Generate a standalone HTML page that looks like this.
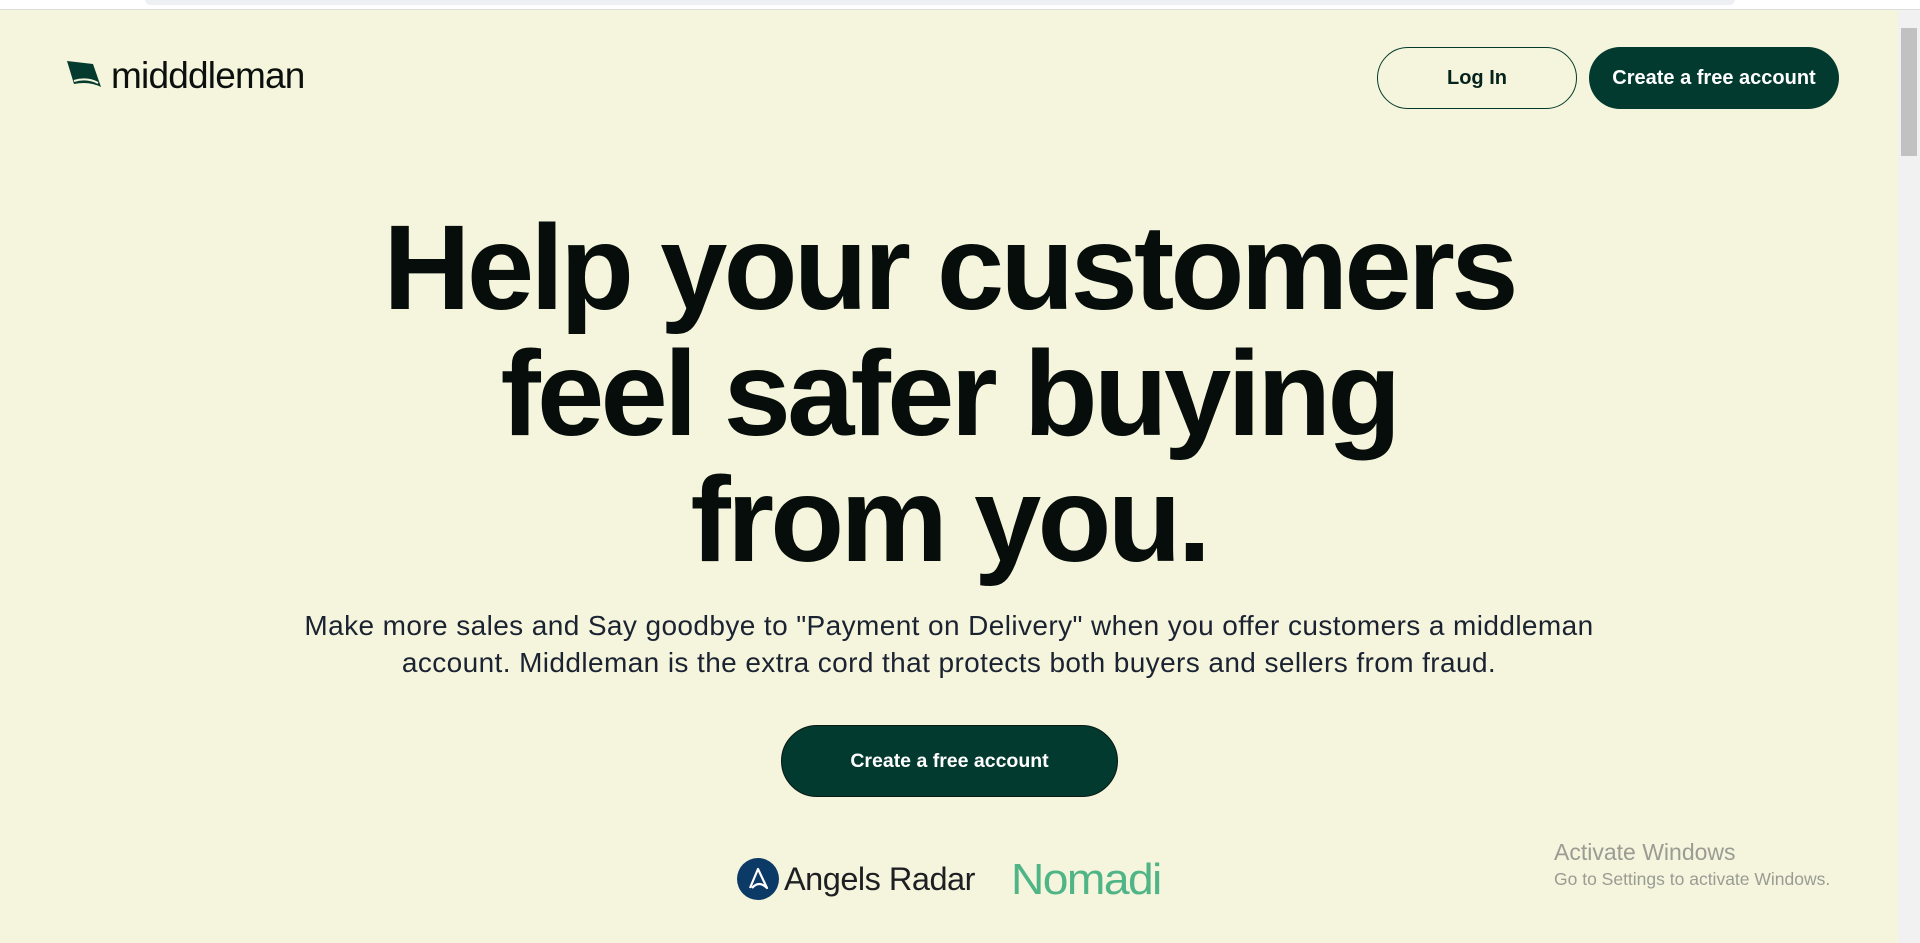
<!DOCTYPE html>
<html><head><meta charset="utf-8"><style>
html,body{margin:0;padding:0;}
body{width:1920px;height:943px;background:#f4f5dc;position:relative;overflow:hidden;font-family:"Liberation Sans",sans-serif;}
.top{position:absolute;left:0;top:0;width:1920px;height:9px;background:#fff;border-bottom:1px solid #dcdcdc;}
.top div{position:absolute;left:145px;top:0;width:1590px;height:5px;background:#eef0f3;border-radius:0 0 10px 10px;}
.sb{position:absolute;right:0;top:10px;width:22px;height:933px;background:#f1f1f1;}
.sb .th{position:absolute;left:3px;top:18px;width:16px;height:128px;background:#c1c1c1;}
.abs{position:absolute;}
.btn{position:absolute;box-sizing:border-box;border-radius:40px;display:flex;align-items:center;justify-content:center;font-weight:bold;font-size:20px;}
h1{position:absolute;left:0;width:1898px;top:204px;margin:0;text-align:center;font-size:121px;line-height:126px;font-weight:bold;letter-spacing:-3.8px;color:#060d0a;}
p{position:absolute;left:0;width:1898px;top:607px;margin:0;text-align:center;font-size:28px;letter-spacing:0.4px;line-height:37px;color:#1b2231;}
.win{position:absolute;left:1554px;top:839px;color:#9a9c94;}
</style></head><body>
<div class="top"><div></div></div>
<svg class="abs" style="left:67px;top:61px" width="36" height="27" viewBox="0 0 36 27"><path d="M0 0 L26 3 L34 26 Q22 20 7 23 Z" fill="#053b2e"/><path d="M7 20 Q20 16 31 22" stroke="#f4f5dc" stroke-width="2" fill="none"/></svg>
<div class="abs" style="left:111px;top:55px;font-size:37px;letter-spacing:-0.8px;color:#0b0f0d;">midddleman</div>
<div class="btn" style="left:1377px;top:47px;width:200px;height:62px;border:1.5px solid #053b2e;color:#05231c;">Log In</div>
<div class="btn" style="left:1589px;top:47px;width:250px;height:62px;background:#033a30;color:#fff;">Create a free account</div>
<h1>Help your customers<br>feel safer buying<br>from you.</h1>
<p>Make more sales and Say goodbye to "Payment on Delivery" when you offer customers a middleman<br>account. Middleman is the extra cord that protects both buyers and sellers from fraud.</p>
<div class="btn" style="left:781px;top:725px;width:337px;height:72px;background:#033a30;color:#fff;border:1.5px solid #0a1a15;font-size:19.5px;">Create a free account</div>
<svg class="abs" style="left:737px;top:858px" width="42" height="42" viewBox="0 0 42 42"><circle cx="21" cy="21" r="21" fill="#0b3a66"/><path d="M13 30 L21 11 L30 30 Q22 22 15 30" stroke="#fff" stroke-width="2.2" fill="none" stroke-linejoin="round"/></svg>
<div class="abs" style="left:784px;top:861px;font-size:32.5px;color:#1e1f22;letter-spacing:-0.5px;">Angels Radar</div>
<div class="abs" style="left:1011px;top:855px;font-size:44px;color:#4fb486;letter-spacing:-1.5px;transform:scaleX(1.05);transform-origin:left;">Nomadi</div>
<div class="win"><div style="font-size:23px;">Activate Windows</div><div style="font-size:17.5px;margin-top:3px;">Go to Settings to activate Windows.</div></div>
<div class="sb"><div class="th"></div></div>
</body></html>
